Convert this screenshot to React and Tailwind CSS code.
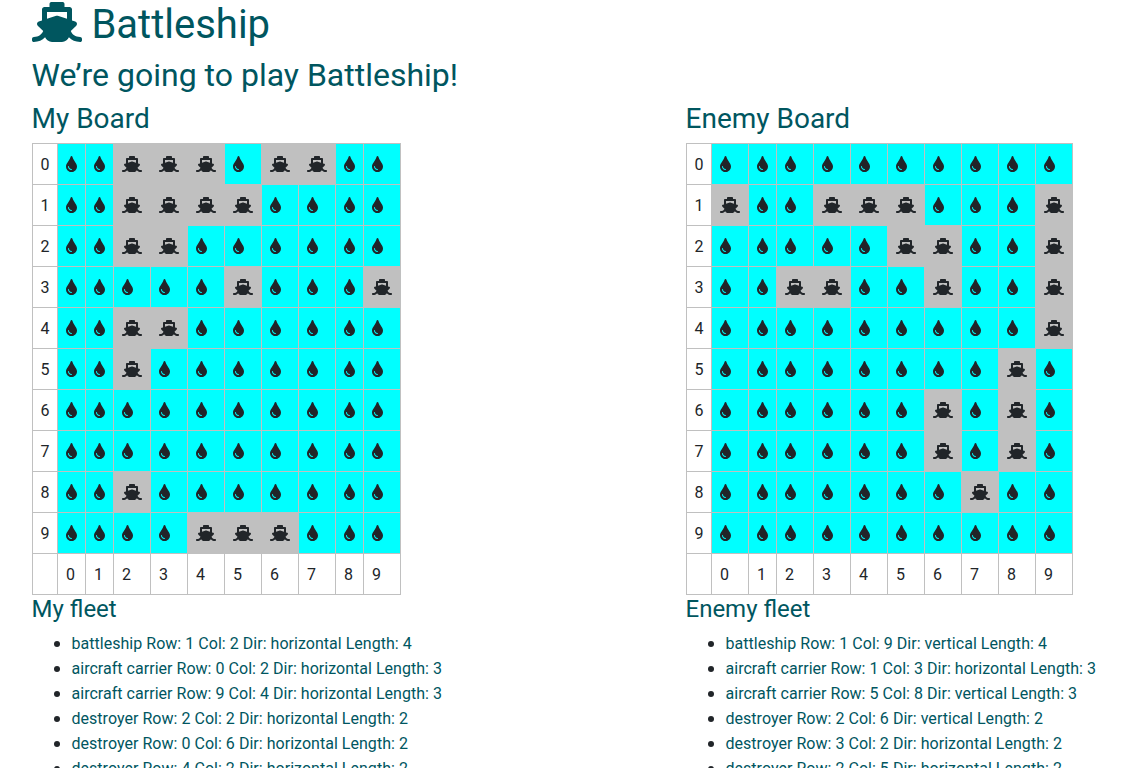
import React from "react";
import { FaShip, FaTint } from "react-icons/fa";

const myBoard = [
  "..sss.ss..",
  "..ssss....",
  "..ss......",
  ".....s...s",
  "..ss......",
  "..s.......",
  "..........",
  "..........",
  "..s.......",
  "....sss...",
];

const enemyBoard = [
  "..........",
  "s..sss...s",
  ".....ss..s",
  "..ss..s..s",
  ".........s",
  "........s.",
  "......s.s.",
  "......s.s.",
  ".......s..",
  "..........",
];

const myFleet = [
  "battleship Row: 1 Col: 2 Dir: horizontal Length: 4",
  "aircraft carrier Row: 0 Col: 2 Dir: horizontal Length: 3",
  "aircraft carrier Row: 9 Col: 4 Dir: horizontal Length: 3",
  "destroyer Row: 2 Col: 2 Dir: horizontal Length: 2",
  "destroyer Row: 0 Col: 6 Dir: horizontal Length: 2",
  "destroyer Row: 4 Col: 2 Dir: horizontal Length: 2",
];

const enemyFleet = [
  "battleship Row: 1 Col: 9 Dir: vertical Length: 4",
  "aircraft carrier Row: 1 Col: 3 Dir: horizontal Length: 3",
  "aircraft carrier Row: 5 Col: 8 Dir: vertical Length: 3",
  "destroyer Row: 2 Col: 6 Dir: vertical Length: 2",
  "destroyer Row: 3 Col: 2 Dir: horizontal Length: 2",
  "destroyer Row: 2 Col: 5 Dir: horizontal Length: 2",
];

const cellClass = "border border-[#c0c0c0] pt-[9px] pb-[7px] pl-[8.5px] pr-[7.5px] text-left align-middle";
const labelClass = "border border-[#c0c0c0] pt-[9px] pb-[7px] pl-2 pr-[7px] text-left align-middle";

const Board = ({ rows }) => (
  <table className="border-collapse text-[#212529]">
    <tbody>
      {rows.map((row, r) => (
        <tr key={r}>
          <td className={labelClass}>{r}</td>
          {row.split("").map((c, i) =>
            c === "s" ? (
              <td key={i} className={`${cellClass} bg-[#c0c0c0]`}>
                <FaShip className="inline-block w-5 h-4 align-[-0.125em]" />
              </td>
            ) : (
              <td key={i} className={`${cellClass} bg-[#00ffff]`}>
                <FaTint className="inline-block w-[11px] h-4 align-[-0.125em]" />
              </td>
            )
          )}
        </tr>
      ))}
      <tr>
        <td className={labelClass}></td>
        {[0, 1, 2, 3, 4, 5, 6, 7, 8, 9].map((n) => (
          <td key={n} className={cellClass}>
            {n}
          </td>
        ))}
      </tr>
    </tbody>
  </table>
);

const Side = ({ title, fleetTitle, rows, fleet }) => (
  <div>
    <h3 className="text-[28px] leading-[1.2] mb-[7px]">{title}</h3>
    <Board rows={rows} />
    <h4 className="text-2xl leading-[1.2] mb-[6px]">{fleetTitle}</h4>
    <ul className="list-disc pl-10 marker:text-[#212529] marker:text-[18px]">
      {fleet.map((item) => (
        <li key={item} className="h-[25px] leading-[25px] tracking-[0.03px]">
          {item}
        </li>
      ))}
    </ul>
  </div>
);

export default function App() {
  return (
    <div className="h-screen overflow-hidden bg-white pl-[31.5px] text-[#00565f] font-['Roboto',sans-serif]">
      <h1 className="text-[40px] leading-[1.2] pt-px mb-[7px]">
        <FaShip className="inline-block w-[50px] h-10 align-[-4px]" /> Battleship
      </h1>
      <h2 className="text-[32px] leading-[1.2] mb-2">We’re going to play Battleship!</h2>
      <div className="grid grid-cols-[654px_1fr]">
        <Side title="My Board" fleetTitle="My fleet" rows={myBoard} fleet={myFleet} />
        <Side title="Enemy Board" fleetTitle="Enemy fleet" rows={enemyBoard} fleet={enemyFleet} />
      </div>
    </div>
  );
}
